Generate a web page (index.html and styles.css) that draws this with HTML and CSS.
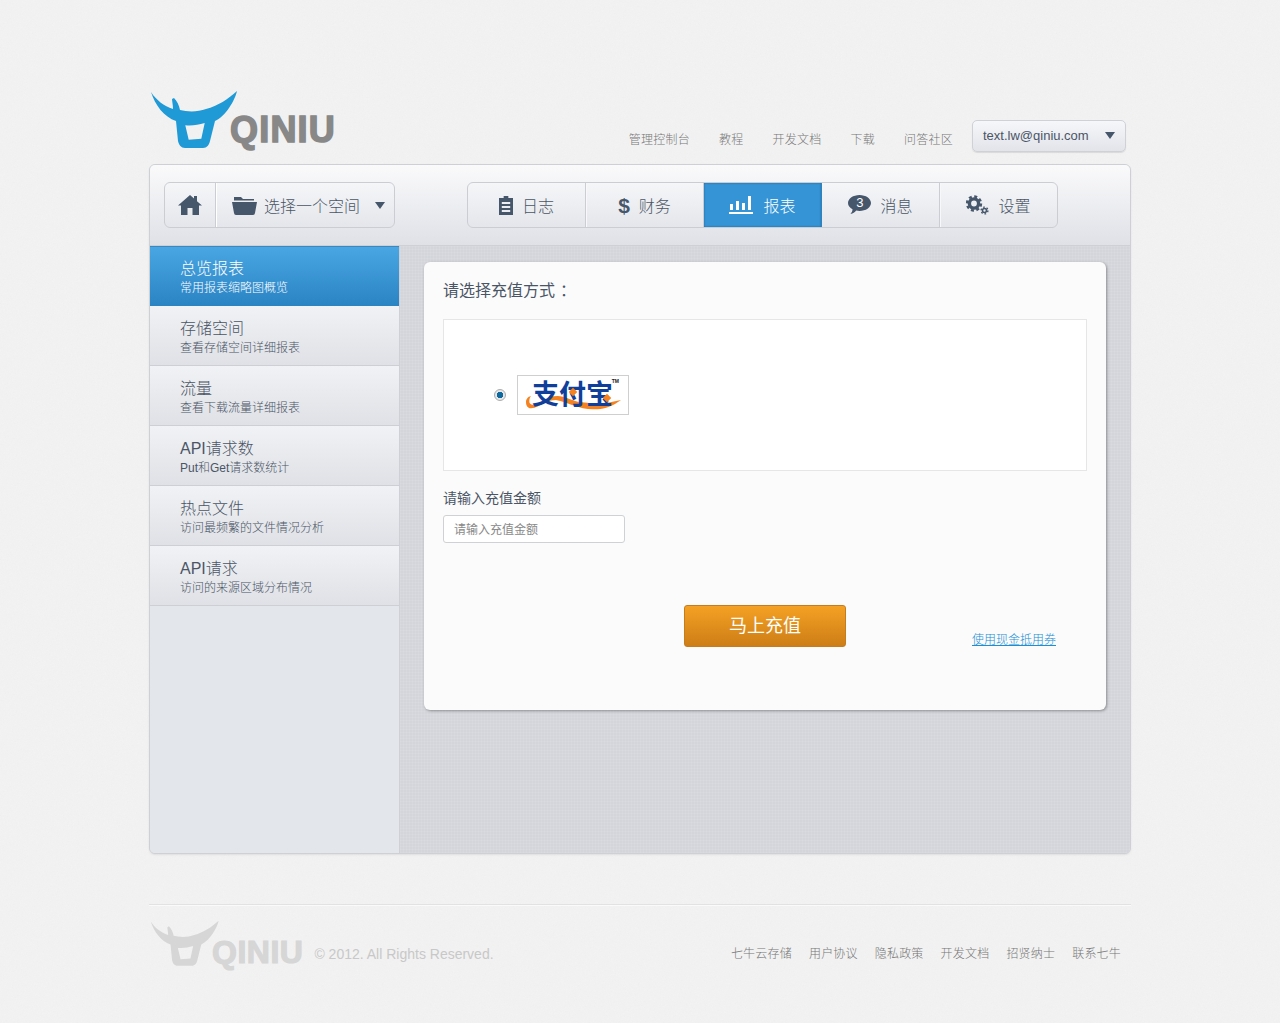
FILE: index.html
```html
<!DOCTYPE html>
<html lang="zh-CN">
<head>
    <meta charset="UTF-8">
    <meta name="viewport" content="width=device-width, initial-scale=1.0">
    <title>Qiniu</title>
    <link rel="stylesheet" href="styles.css">
</head>
<body>
    <svg class="defs" width="0" height="0">
        <symbol id="bull" viewBox="0 0 90 62">
            <path fill-rule="evenodd" d="M1 2 C6 10 14 16 23 19 C23 15 22 11 22 9 L24 8 C27 11 29 15 30 20 C38 22 48 22 56 19 C68 16 78 9 87 1 C85 10 76 26 65 31 L60 51 C59 55 57 58 53 58 L35 58 C31 58 29 55 28 51 L26 31 C14 27 5 15 1 2 Z M35.300 35.300 L38.700 49.700 L51.300 48.700 L54.700 33 C48 35 42 36 35.300 35.300 Z"/>
        </symbol>
    </svg>
    <div class="page">
        <header class="top">
            <a class="logo">
                <svg class="bull bull-blue" width="90" height="62"><use href="#bull"/></svg>
                <span class="logo-text">QINIU</span>
            </a>
            <div class="top-right">
                <nav class="top-links">
                    <a>管理控制台</a>
                    <a>教程</a>
                    <a>开发文档</a>
                    <a>下载</a>
                    <a>问答社区</a>
                </nav>
                <div class="account">
                    <span>text.lw@qiniu.com</span>
                    <i class="caret"></i>
                </div>
            </div>
        </header>

        <div class="shell">
            <div class="toolbar">
                <div class="space-picker">
                    <a class="home">
                        <svg width="24" height="20" viewBox="0 0 24 20"><path d="M12 0 L16 3.500 L16 1 L19 1 L19 6.200 L24 10.500 L21 10.500 L21 20 L14.500 20 L14.500 13 L9.500 13 L9.500 20 L3 20 L3 10.500 L0 10.500 Z"/></svg>
                    </a>
                    <a class="space">
                        <svg width="25" height="20" viewBox="0 0 25 20"><path d="M2 2 L9 2 L11 4 L22 4 L22 5.500 L2 5.500 Z M0 7 L25 7 L23 18 Q22.800 20 21 20 L4 20 Q2.200 20 2 18 Z"/></svg>
                        <span>选择一个空间</span>
                        <i class="caret"></i>
                    </a>
                </div>
                <nav class="tabs">
                    <a class="tab">
                        <svg width="14" height="19" viewBox="0 0 15 19" preserveAspectRatio="none"><path fill-rule="evenodd" d="M5 0 L10 0 L10 2 L15 2 L15 19 L0 19 L0 2 L5 2 Z M3 6 L3 8 L12 8 L12 6 Z M3 10 L3 12 L12 12 L12 10 Z M3 14 L3 16 L12 16 L12 14 Z"/></svg>
                        <span>日志</span>
                    </a>
                    <a class="tab">
                        <b class="dollar">$</b>
                        <span>财务</span>
                    </a>
                    <a class="tab active">
                        <svg width="24" height="18" viewBox="0 0 24 18"><path d="M1 8 L4 8 L4 14 L1 14 Z M7 5 L10 5 L10 14 L7 14 Z M13 7 L16 7 L16 14 L13 14 Z M19 0 L22 0 L22 14 L19 14 Z M0 16 L24 16 L24 18 L0 18 Z"/></svg>
                        <span>报表</span>
                    </a>
                    <a class="tab">
                        <span class="chat">
                            <svg width="23" height="20" viewBox="0 0 23 20"><path d="M11.500 0 C17.800 0 23 3.600 23 8 C23 12.400 17.800 16 11.500 16 C10.300 16 9.200 15.900 8.200 15.600 C6.800 17.400 5 18.600 2.500 19 C3.800 17.500 4.500 16 4.500 14.300 C1.800 12.900 0 10.600 0 8 C0 3.600 5.200 0 11.500 0 Z"/></svg>
                            <em>3</em>
                        </span>
                        <span>消息</span>
                    </a>
                    <a class="tab">
                        <svg class="gears" width="23" height="20" viewBox="0 0 23 20">
                            <circle cx="8" cy="8.500" r="4.600" fill="none" stroke-width="3.400"/>
                            <circle cx="8" cy="8.500" r="7" fill="none" stroke-width="2.400" stroke-dasharray="3 2.500"/>
                            <circle cx="18.500" cy="15.500" r="2" fill="none" stroke-width="1.600"/>
                            <circle cx="18.500" cy="15.500" r="3.400" fill="none" stroke-width="1.400" stroke-dasharray="1.700 1.860"/>
                        </svg>
                        <span>设置</span>
                    </a>
                </nav>
            </div>

            <div class="body">
                <aside class="side">
                    <a class="side-item active"><strong>总览报表</strong><small>常用报表缩略图概览</small></a>
                    <a class="side-item"><strong>存储空间</strong><small>查看存储空间详细报表</small></a>
                    <a class="side-item"><strong>流量</strong><small>查看下载流量详细报表</small></a>
                    <a class="side-item"><strong>API请求数</strong><small>Put和Get请求数统计</small></a>
                    <a class="side-item"><strong>热点文件</strong><small>访问最频繁的文件情况分析</small></a>
                    <a class="side-item"><strong>API请求</strong><small>访问的来源区域分布情况</small></a>
                </aside>
                <main class="main">
                    <section class="card">
                        <h2>请选择充值方式<span class="colon">：</span></h2>
                        <div class="pay-box">
                            <label class="pay-option">
                                <i class="radio"></i>
                                <span class="alipay">
                                    <svg class="swoosh" width="96" height="15" viewBox="0 0 96 15"><path d="M6 1 C2 2 1 5 1 7 C1 11 3 13.300 6 13.300 C11 13.300 15 10 19 8.300 C23 6 27 5 31 5 C38 6 45 10 52.700 11.700 C60 14 66 14.300 72.700 14.300 C80 14 88 11 96 5 C88 7 80 8.300 72.700 8.300 C65 8.300 58 7.500 52.700 6.700 C46 5 39 1 32.700 1 C27 1 23 3 19 5 C15 7 12 10 9 10 C6 10 4.300 8.500 4.300 6.700 C4.300 4 5 2 6 1 Z"/></svg>
                                    <b>支付宝</b>
                                    <i class="gem gem-a"></i>
                                    <i class="gem gem-b"></i>
                                    <sup>TM</sup>
                                </span>
                            </label>
                        </div>
                        <label class="amount-label" for="amount">请输入充值金额</label>
                        <input class="amount" id="amount" type="text" placeholder="请输入充值金额">
                        <div class="actions">
                            <button class="pay-btn" type="button">马上充值</button>
                            <a class="voucher">使用现金抵用券</a>
                        </div>
                    </section>
                </main>
            </div>
        </div>

        <footer class="foot">
            <div class="foot-left">
                <svg class="bull bull-grey" width="71" height="49"><use href="#bull"/></svg>
                <span class="foot-logo">QINIU</span>
                <span class="copy">© 2012. All Rights Reserved.</span>
            </div>
            <nav class="foot-links">
                <a>七牛云存储</a>
                <a>用户协议</a>
                <a>隐私政策</a>
                <a>开发文档</a>
                <a>招贤纳士</a>
                <a>联系七牛</a>
            </nav>
        </footer>
    </div>
</body>
</html>
```

FILE: styles.css
```css
* {
    box-sizing: border-box;
}
html, body {
    height: 100%;
}
body {
    margin: 0;
    background-color: #f3f3f3;
    background-image: url("data:image/svg+xml,%3Csvg xmlns='http://www.w3.org/2000/svg' width='256' height='256'%3E%3Cfilter id='n'%3E%3CfeTurbulence type='fractalNoise' baseFrequency='.8' numOctaves='2' stitchTiles='stitch'/%3E%3CfeColorMatrix values='0 0 0 0 .6 0 0 0 0 .6 0 0 0 0 .6 0 0 0 .1 0'/%3E%3C/filter%3E%3Crect width='256' height='256' filter='url(%23n)'/%3E%3C/svg%3E");
    font-family: "Liberation Sans", "Noto Sans CJK SC", sans-serif;
    font-weight: 300;
    color: #4a5566;
    overflow: hidden;
}
a {
    text-decoration: none;
    color: inherit;
}
.defs {
    position: absolute;
}
.page {
    width: 982px;
    margin: 0 auto;
}

/* header */
.top {
    height: 164px;
    display: flex;
    justify-content: space-between;
    align-items: flex-start;
    padding: 90px 5px 0 1px;
}
.logo {
    display: flex;
    align-items: flex-start;
}
.bull {
    display: block;
    flex: none;
}
.bull-blue {
    fill: #1f9ad6;
}
.bull-grey {
    fill: #d6d6d6;
}
.logo-text {
    margin: 15px 0 0 -10px;
    font-size: 36px;
    font-weight: 700;
    line-height: 50px;
    letter-spacing: 1.2px;
    color: #888;
    -webkit-text-stroke: 1.5px #888;
}
.top-right {
    display: flex;
    align-items: flex-start;
    padding-top: 30px;
}
.top-links {
    display: flex;
    gap: 29px;
    margin: 11px 19px 0 0;
    font-size: 12px;
    letter-spacing: 0.25px;
    line-height: 18px;
    color: #777;
}
.account {
    width: 154px;
    height: 32px;
    padding: 0 10px 2px;
    display: flex;
    justify-content: space-between;
    align-items: center;
    font-size: 13px;
    color: #4a5566;
    background: linear-gradient(#f6f7f9, #e2e4ea);
    border: 1px solid #cfd1d7;
    border-radius: 5px;
    box-shadow: 0 1px 1px rgba(0, 0, 0, 0.1);
}
.caret {
    display: block;
    width: 0;
    height: 0;
    border-left: 5px solid transparent;
    border-right: 5px solid transparent;
    border-top: 7px solid #46566b;
}

/* main frame */
.shell {
    height: 690px;
    background-color: #e3e6eb;
    border: 1px solid #cfd0d5;
    border-radius: 6px;
    box-shadow: 0 1px 2px rgba(0, 0, 0, 0.08);
    overflow: hidden;
    display: flex;
    flex-direction: column;
}
.toolbar {
    height: 81px;
    flex: none;
    display: flex;
    align-items: flex-start;
    padding: 17px 0 0 14px;
    background: linear-gradient(#fafafb, #dfe1e7);
    border-bottom: 1px solid #cfd0d5;
}
.space-picker, .tabs {
    height: 46px;
    display: flex;
    border: 1px solid #cbcdd3;
    border-radius: 6px;
    background: linear-gradient(#f5f6f8, #e4e6eb);
}
.space-picker {
    width: 231px;
}
.home {
    width: 51px;
    display: flex;
    justify-content: center;
    align-items: center;
    border-right: 1px solid #cbcdd3;
    box-shadow: 1px 0 0 #fff;
}
.home svg, .space svg, .tab svg {
    fill: #46566b;
    display: block;
    flex: none;
}
.space {
    flex: 1;
    display: flex;
    align-items: center;
    padding: 0 8px 0 16px;
    font-size: 16px;
    color: #4a5566;
}
.space span {
    margin-left: 7px;
    margin-right: 15px;
    white-space: nowrap;
}
.tabs {
    width: 591px;
    margin-left: 72px;
}
.tab {
    width: 118px;
    flex: none;
    display: flex;
    justify-content: center;
    align-items: center;
    gap: 9px;
    font-size: 16px;
    border-right: 1px solid #cbcdd3;
    box-shadow: 1px 0 0 #f8f8fa;
}
.tab:last-child {
    flex: 1;
    width: auto;
    border-right: 0;
    box-shadow: none;
}
.tab.active {
    gap: 10px;
    background-color: #3594d5;
    color: #fff;
    border-right-color: #2f82bd;
    box-shadow: inset 0 0 2px rgba(0, 50, 90, 0.5);
}
.tab.active svg {
    fill: #fff;
}
.tab .gears {
    fill: none;
    stroke: #46566b;
}
.dollar {
    font-size: 21px;
    font-weight: 700;
    color: #46566b;
    line-height: 1;
}
.chat {
    position: relative;
    display: block;
    height: 20px;
}
.chat em {
    position: absolute;
    left: 0;
    top: 0;
    width: 23px;
    font-style: normal;
    font-size: 13px;
    line-height: 16px;
    text-align: center;
    color: #fff;
}

/* sidebar + content */
.body {
    flex: 1;
    display: flex;
    min-height: 0;
}
.side {
    width: 250px;
    flex: none;
    background-color: #e3e6eb;
    border-right: 1px solid #ced0d5;
}
.side-item {
    display: block;
    height: 60px;
    padding: 12px 0 0 30px;
    background: linear-gradient(#f1f2f5, #dfe1e6);
    border-bottom: 1px solid #cdcfd5;
    color: #4a5566;
}
.side-item strong {
    display: block;
    font-size: 16px;
    font-weight: 300;
    line-height: 21px;
}
.side-item small {
    display: block;
    font-size: 12px;
    line-height: 18px;
}
.side-item.active {
    padding-top: 11px;
    background: linear-gradient(#4aa6e3, #2a83c3);
    border-top: 1px solid #3b87c0;
    border-bottom: 0;
    color: #fff;
}
.main {
    flex: 1;
    padding: 16px 24px 0 24px;
    background-color: #d4d5db;
    background-image:
        repeating-linear-gradient(90deg, rgba(255, 255, 255, 0.07) 0 1px, transparent 1px 3px),
        repeating-linear-gradient(0deg, rgba(255, 255, 255, 0.07) 0 1px, transparent 1px 3px);
}
.card {
    height: 448px;
    padding: 17px 19px 0;
    background-color: #fbfbfb;
    border-radius: 6px;
    box-shadow: 1px 1px 3px rgba(0, 0, 0, 0.35);
}
.card h2 {
    height: 24px;
    margin: 0 0 16px;
    font-size: 16px;
    font-weight: 400;
    line-height: 24px;
    color: #4a5566;
}
.colon {
    margin-left: 5px;
}
.pay-box {
    height: 152px;
    display: flex;
    align-items: center;
    padding-left: 50px;
    background-color: #fff;
    border: 1px solid #e6e6e6;
}
.pay-option {
    display: flex;
    align-items: center;
    gap: 11px;
}
.radio {
    display: block;
    width: 12px;
    height: 12px;
    border-radius: 50%;
    border: 1px solid #a9adb1;
    background: radial-gradient(circle, #0f6a9f 0 3px, #e8e8e8 3.5px);
}
.alipay {
    position: relative;
    display: block;
    width: 112px;
    height: 40px;
    background-color: #fff;
    border: 1px solid #cfcfcf;
}
.alipay b {
    position: absolute;
    left: 14px;
    top: 2px;
    z-index: 1;
    font-family: "Noto Sans CJK SC", sans-serif;
    font-size: 27px;
    line-height: 30px;
    font-weight: 700;
    color: #0f3f9b;
    white-space: nowrap;
}
.alipay sup {
    position: absolute;
    right: 9px;
    top: 3px;
    font-size: 5px;
    font-weight: 700;
    line-height: 5px;
    color: #222;
}
.swoosh {
    position: absolute;
    left: 7px;
    top: 19px;
    fill: #f58220;
}
.gem {
    position: absolute;
    z-index: 2;
    width: 6px;
    height: 6px;
    background-color: #f58220;
    transform: rotate(45deg);
}
.gem-a {
    left: 52px;
    top: 13px;
}
.gem-b {
    left: 86px;
    top: 19px;
}
.amount-label {
    display: block;
    margin-top: 17px;
    font-size: 14px;
    font-weight: 400;
    line-height: 20px;
    color: #4a5566;
}
.amount {
    display: block;
    width: 182px;
    height: 28px;
    margin-top: 7px;
    padding: 2px 10px 0;
    font-family: inherit;
    font-size: 12px;
    background-color: #fff;
    border: 1px solid #cfd1d5;
    border-radius: 3px;
}
.amount::placeholder {
    color: #888;
}
.actions {
    position: relative;
    margin-top: 62px;
    padding-left: 241px;
}
.pay-btn {
    display: block;
    width: 162px;
    height: 42px;
    padding: 0 0 4px;
    font-family: inherit;
    font-size: 18px;
    font-weight: 400;
    color: #fff;
    background: linear-gradient(#f4a124, #cd7e16);
    border: 1px solid #c67c1c;
    border-radius: 3px;
}
.voucher {
    position: absolute;
    right: 31px;
    top: 26px;
    font-size: 12px;
    line-height: 18px;
    color: #1b8fd6;
    text-decoration: underline;
}

/* footer */
.foot {
    margin-top: 50px;
    padding: 16px 10px 0 1px;
    display: flex;
    justify-content: space-between;
    align-items: flex-start;
    border-top: 1px solid #e2e2e2;
    box-shadow: inset 0 1px 0 #fafafa;
}
.foot-left {
    display: flex;
    align-items: flex-start;
    margin-top: -1px;
}
.foot-logo {
    margin: 10px 0 0 -9px;
    font-size: 32px;
    font-weight: 700;
    line-height: 44px;
    letter-spacing: 0.5px;
    color: #d6d6d6;
    -webkit-text-stroke: 1.2px #d6d6d6;
}
.copy {
    margin: 23px 0 0 11px;
    font-size: 14px;
    font-weight: 400;
    line-height: 22px;
    color: #c8c8c8;
    white-space: nowrap;
}
.foot-links {
    display: flex;
    gap: 17px;
    margin-top: 24px;
    font-size: 12px;
    letter-spacing: 0.2px;
    line-height: 18px;
    color: #777;
}
```
